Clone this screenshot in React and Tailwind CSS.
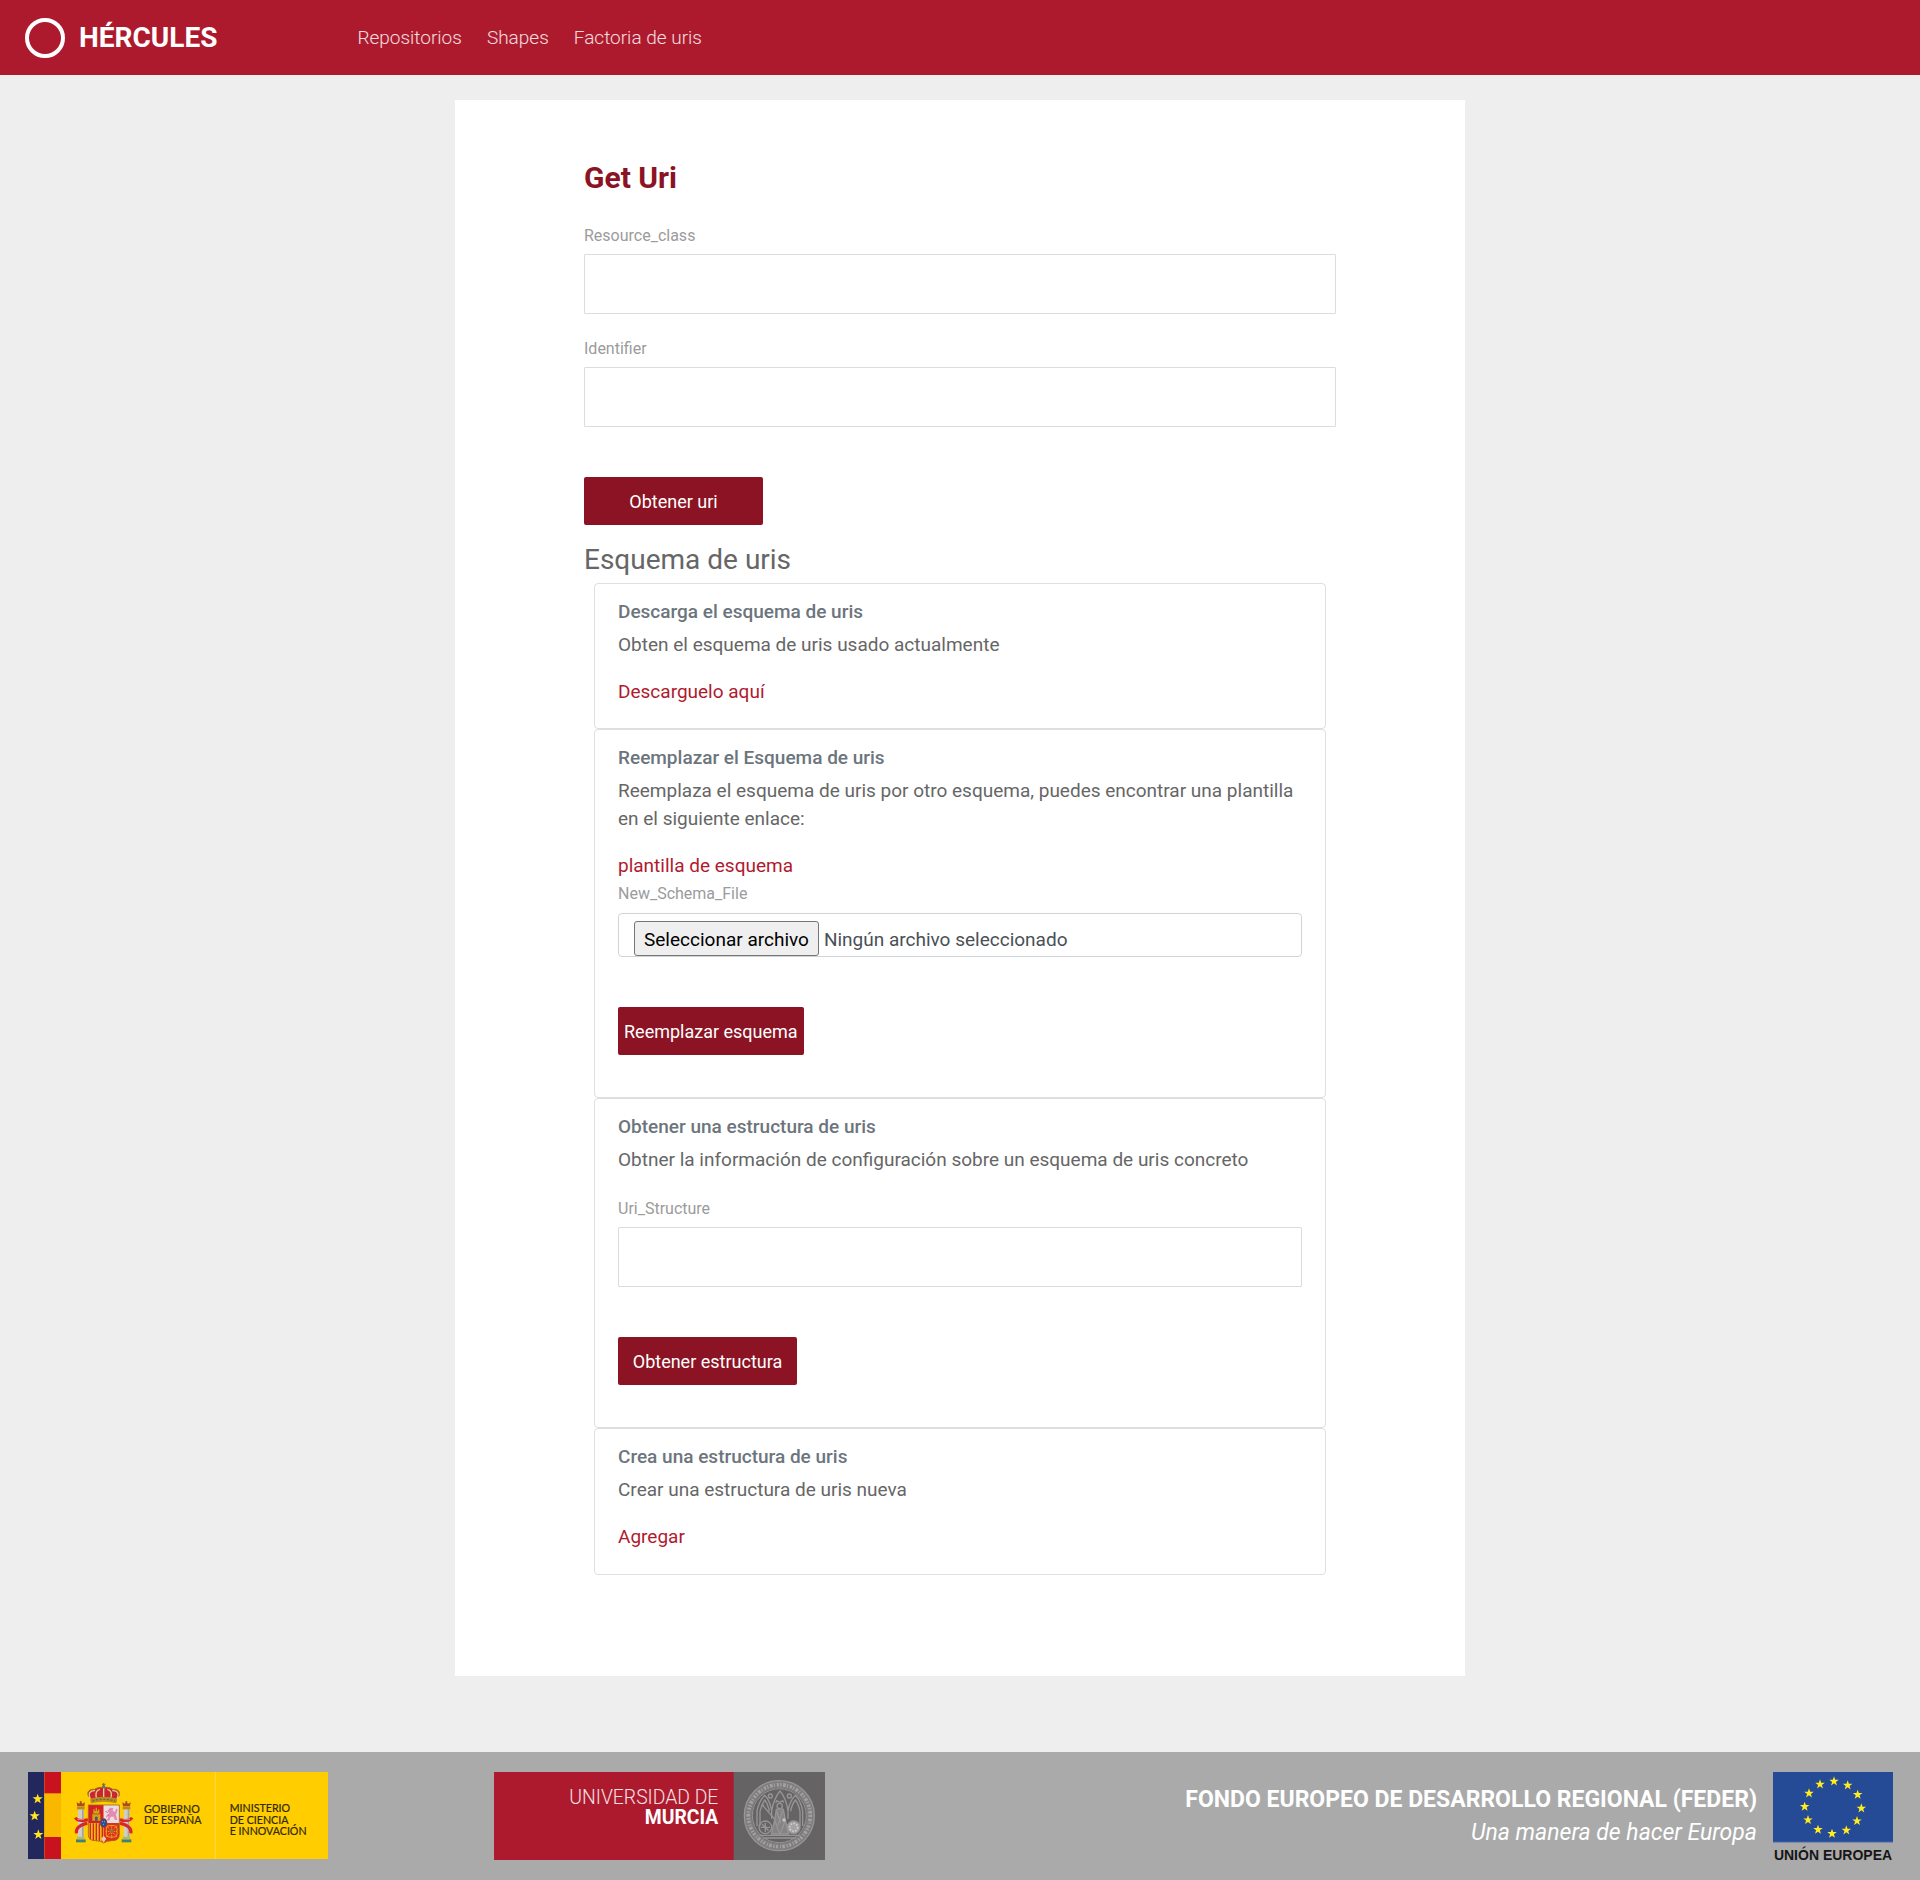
const STAR = '0,-10 2.4,-3.2 9.5,-3.1 3.8,1.2 5.9,8.1 0,4 -5.9,8.1 -3.8,1.2 -9.5,-3.1 -2.4,-3.2';

function Star({ x, y, size = 1 }) {
  return <polygon points={STAR} transform={`translate(${x} ${y}) scale(${size})`} />;
}

function Pillar({ x }) {
  return (
    <g transform={`translate(${x} 0)`}>
      <rect x="-14" y="298" width="29" height="9" fill="#3f8077" />
      <rect x="-10" y="289" width="21" height="9" fill="#a8b878" />
      <rect x="-8" y="208" width="17" height="82" fill="#cfcdc8" />
      <rect x="4" y="208" width="5" height="82" fill="#a5a3a0" />
      <rect x="-11" y="200" width="23" height="8" fill="#b98a1c" />
      <path d="M-10 199 L-12 187 L-4 191 L0 183 L5 191 L13 187 L11 199Z" fill="#b4452a" />
      <circle cx="0" cy="186" r="3" fill="#8a6a10" />
    </g>
  );
}

function SpainLogo() {
  return (
    <svg viewBox="84 96 900 261" className="h-[87px] w-[300px] shrink-0" role="img" aria-label="Gobierno de España, Ministerio de Ciencia e Innovación">
      <rect x="84" y="96" width="900" height="261" fill="#ffcd00" />
      <rect x="84" y="96" width="49" height="261" fill="#22285e" />
      <rect x="133" y="96" width="50" height="261" fill="#f9b700" />
      <rect x="133" y="96" width="50" height="64" fill="#c9121f" />
      <rect x="133" y="291" width="50" height="66" fill="#c9121f" />
      <g fill="#ffe620">
        <Star x={113} y={177} size={1.6} />
        <Star x={104} y={228} size={1.6} />
        <Star x={115} y={284} size={1.6} />
      </g>
      <rect x="644" y="96" width="4" height="261" fill="#ffd936" />

      {/* Crown */}
      <path d="M272 178 C256 158 266 146 284 148 C296 140 304 142 311 143 C318 142 327 140 338 148 C356 146 366 158 350 178Z" fill="#c9272d" />
      <path d="M272 178 C262 160 270 151 285 152 M290 178 C284 160 290 149 300 148 M332 178 C338 160 332 149 322 148 M350 178 C360 160 352 151 337 152 M311 144 V178" fill="none" stroke="#e6cf8a" strokeWidth="4" />
      <path d="M266 170 C258 156 268 146 284 148 C296 140 304 142 311 143 C318 142 327 140 338 148 C354 146 364 156 356 170" fill="none" stroke="#a07a18" strokeWidth="3" />
      <path d="M270 176 Q311 164 352 176 L349 190 Q311 181 273 190Z" fill="#c08a1a" />
      <path d="M277 182 Q311 174 345 182" fill="none" stroke="#3b7a5b" strokeWidth="4" strokeDasharray="6 5" />
      <circle cx="311" cy="140" r="5" fill="#567a86" />
      <path d="M311 129 V139 M306 133 H316" stroke="#8a6a10" strokeWidth="3" />

      <Pillar x={242} />
      <Pillar x={379} />

      {/* Ribbons */}
      <g fill="none" stroke="#d8262c" strokeWidth="9">
        <path d="M226 233 Q232 246 264 239" />
        <path d="M262 250 Q226 258 229 280" />
        <path d="M396 233 Q390 246 358 239" />
        <path d="M360 250 Q396 258 393 280" />
      </g>
      <path d="M232 238 H252 M370 238 H390" stroke="#f2b7a8" strokeWidth="2" />

      {/* Shield */}
      <path d="M265 195 H311 V249 H265Z" fill="#d3202a" />
      <path d="M311 195 H358 V249 H311Z" fill="#e8dfe2" />
      <path d="M265 249 H311 V309 Q300 302 286 302 Q265 302 265 284Z" fill="#f3b312" />
      <path d="M311 249 H358 V284 Q358 302 336 302 Q322 302 311 309Z" fill="#d9301f" />
      <path d="M271 250 V298 M280 250 V301 M289 250 V302 M298 250 V303 M307 250 V305" stroke="#cf2a20" strokeWidth="4" />
      <path d="M265 195 H358 V284 Q358 302 336 302 Q320 302 311 309 Q302 302 286 302 Q265 302 265 284Z" fill="none" stroke="#a8641a" strokeWidth="2.5" />
      <path d="M277 242 V222 H280 V208 H284 V213 H287 V203 H291 V213 H294 V208 H298 V222 H301 V242Z" fill="#d7a010" />
      <path d="M285 242 V232 Q289 227 293 232 V242Z" fill="#3a5a78" />
      <path d="M280 222 H298" stroke="#77520c" strokeWidth="2" />
      <path d="M322 212 L330 203 L340 204 L338 212 L345 216 L349 205 L353 209 L348 224 L352 240 L344 240 L341 230 L332 230 L328 242 L320 241 L326 230 L319 226 L328 220Z" fill="#e58bb0" />
      <path d="M324 218 L316 214 M327 224 L318 232" stroke="#d9709b" strokeWidth="3" />
      <g fill="none" stroke="#eda51a" strokeWidth="3">
        <rect x="319" y="257" width="32" height="34" rx="8" />
        <path d="M319 257 L351 291 M351 257 L319 291 M335 255 V295 M317 274 H353" strokeDasharray="4 2" />
      </g>
      <circle cx="335" cy="273" r="4" fill="#5a8a3a" />
      <path d="M303 296 L311 287 L319 296 L311 308Z" fill="#e9c9a0" />
      <ellipse cx="311" cy="249" rx="11" ry="14" fill="#c4262e" />
      <ellipse cx="311" cy="249" rx="9" ry="12" fill="#20539b" />
      <path d="M307 245 h2 M313 245 h2 M310 253 h2" stroke="#f2d24a" strokeWidth="3" />

      <g fill="#33290a" stroke="#33290a" strokeWidth="0.6" fontFamily="Lato, 'Open Sans', sans-serif" fontSize="32">
        <text x="432" y="218">GOBIERNO</text>
        <text x="432" y="251">DE ESPAÑA</text>
        <text x="689" y="217">MINISTERIO</text>
        <text x="689" y="251">DE CIENCIA</text>
        <text x="689" y="285">E INNOVACIÓN</text>
      </g>
    </svg>
  );
}

function MurciaLogo() {
  return (
    <svg viewBox="72 96 993 264" className="h-[88px] w-[331px] shrink-0" role="img" aria-label="Universidad de Murcia">
      <rect x="72" y="96" width="720" height="264" fill="#ae1a2d" />
      <rect x="791" y="96" width="274" height="264" fill="#666364" />
      <text x="745" y="191" textAnchor="end" fill="#f7e0e3" fontFamily="Roboto, sans-serif" fontWeight="300" fontSize="58">UNIVERSIDAD DE</text>
      <text x="745" y="253" textAnchor="end" fill="#ffffff" fontFamily="Roboto, sans-serif" fontWeight="700" fontSize="58">MURCIA</text>

      {/* University seal */}
      <g fill="none" stroke="#979596">
        <circle cx="928" cy="227" r="94" stroke="#7f7d7e" strokeWidth="22" />
        <circle cx="928" cy="227" r="105" strokeWidth="4" />
        <circle cx="928" cy="227" r="81" strokeWidth="3" />
        <circle cx="928" cy="227" r="93" stroke="#a3a1a2" strokeWidth="11" strokeDasharray="4 5 8 4 3 6 6 4" />
        <g strokeWidth="4">
          <path d="M861 258 V212 Q868 182 884 166 Q900 182 905 212 V236" />
          <path d="M905 212 Q912 174 930 153 Q948 174 954 212 V236" />
          <path d="M954 212 Q960 182 976 166 Q992 182 998 212 V258" />
          <path d="M870 258 V214 Q876 192 884 180 Q894 192 898 214" />
          <path d="M962 214 Q966 192 976 180 Q986 192 990 214 V258" />
          <path d="M878 196 L916 240 M874 200 L882 194" />
          <circle cx="901" cy="168" r="6" />
          <circle cx="958" cy="168" r="6" />
          <circle cx="929" cy="198" r="8" />
          <path d="M917 188 L920 182 L929 187 L938 182 L941 188" />
          <path d="M919 208 Q929 204 940 208 L946 240 L956 282 H904 L914 240Z" fill="#858384" />
          <path d="M920 214 L932 250 M938 212 L924 256 M914 240 L930 284 M946 240 L930 284" />
          <path d="M868 286 H990 M880 294 H978" />
          <circle cx="886" cy="262" r="19" />
          <path d="M872 262 H900 M886 248 V276 M876 252 L896 272" />
        </g>
        <circle cx="971" cy="262" r="19" fill="#a5a3a4" strokeWidth="4" />
        <circle cx="971" cy="262" r="12" stroke="#d0cfcf" strokeWidth="5" strokeDasharray="5 4" />
        <circle cx="942" cy="240" r="5" fill="#c5c4c4" stroke="none" />
      </g>
    </svg>
  );
}

const EU_STARS = [
  [222, 64], [263, 76], [293, 104], [304, 145], [291, 183], [259, 211],
  [216, 221], [174, 209], [144, 180], [134, 140], [147, 100], [180, 73],
];

function EuropeLogo() {
  return (
    <svg viewBox="39 36 360 270" className="h-[90px] w-[120px] shrink-0" role="img" aria-label="Unión Europea">
      <rect x="39" y="36" width="360" height="210" fill="#254a96" />
      <rect x="39" y="245" width="360" height="3" fill="#5f79ae" />
      <g fill="#ffed1f">
        {EU_STARS.map(([x, y]) => <Star key={`${x}-${y}`} x={x} y={y} size={1.5} />)}
      </g>
      <text x="219" y="299" textAnchor="middle" fill="#161616" fontFamily="'Liberation Sans', Arial, sans-serif" fontWeight="700" fontSize="42">UNIÓN EUROPEA</text>
    </svg>
  );
}

function Field({ id, label }) {
  return (
    <div>
      <label htmlFor={id} className="block text-base leading-6 text-[#9b9b9b]">{label}</label>
      <input id={id} type="text" className="mt-[6px] block h-[60px] w-full rounded-[1px] border border-[#dedbdd] bg-white px-3 outline-none" />
    </div>
  );
}

function ActionButton({ children }) {
  return (
    <button type="button" className="mt-[50px] block h-12 min-w-[179px] rounded-[2px] bg-[#8b1323] px-[6px] pt-[2px] text-lg text-white">
      {children}
    </button>
  );
}

function SchemaCard({ title, text, children, className = '' }) {
  return (
    <section className={`rounded border border-[#dfdfdf] px-[23px] pt-[17px] ${className}`}>
      <h3 className="mb-2 text-[19px] leading-[22px] font-medium text-[#6c757d]">{title}</h3>
      <p className="mb-[19px]">{text}</p>
      {children}
    </section>
  );
}

function TextLink({ children }) {
  return <a href="#" className="block w-fit text-[#b01a2e]">{children}</a>;
}

export default function App() {
  return (
    <div className="flex min-h-screen flex-col bg-[#eeeeee] font-[Roboto,sans-serif] text-[19px] leading-7 text-[#666666]">
      <header className="flex h-[75px] items-center bg-[#ae1a2d] px-[25px] text-white">
        <a href="#" className="flex items-center gap-[14px] text-[28px] font-bold">
          <svg viewBox="0 0 40 40" className="size-10" aria-hidden="true">
            <circle cx="20" cy="20" r="18" fill="none" stroke="currentColor" strokeWidth="4" />
          </svg>
          HÉRCULES
        </a>
        <nav className="ml-[140px] flex gap-[25px] pt-px font-light text-white/85">
          <a href="#">Repositorios</a>
          <a href="#">Shapes</a>
          <a href="#">Factoria de uris</a>
        </nav>
      </header>

      <main className="mx-auto mt-[25px] mb-[75px] w-full max-w-[1010px] bg-white px-[129px] pt-[60px] pb-[101px]">
        <h1 className="text-[30px] leading-9 font-bold text-[#8b1323]">Get Uri</h1>
        <form className="mt-7">
          <div className="flex flex-col gap-[23px]">
            <Field id="resource-class" label="Resource_class" />
            <Field id="identifier" label="Identifier" />
          </div>
          <ActionButton>Obtener uri</ActionButton>
        </form>

        <h2 className="mt-[17px] text-[28px] leading-9">Esquema de uris</h2>
        <div className="mx-[10px] mt-[5px]">
          <SchemaCard title="Descarga el esquema de uris" text="Obten el esquema de uris usado actualmente" className="pb-[22px]">
            <TextLink>Descarguelo aquí</TextLink>
          </SchemaCard>

          <SchemaCard
            title="Reemplazar el Esquema de uris"
            text="Reemplaza el esquema de uris por otro esquema, puedes encontrar una plantilla en el siguiente enlace:"
            className="pb-[42px]"
          >
            <TextLink>plantilla de esquema</TextLink>
            <form>
              <label htmlFor="schema-file" className="mt-[2px] block text-base leading-6 text-[#9b9b9b]">New_Schema_File</label>
              <label className="mt-[7px] flex h-11 items-end overflow-hidden rounded border border-[#ced4da] px-[15px] text-[#495057]">
                <input id="schema-file" type="file" className="sr-only" />
                <span className="flex h-[35px] items-center rounded-[3px] border border-[#767676] bg-[#efefef] px-[9px] pt-[2px] text-black">Seleccionar archivo</span>
                <span className="flex h-[35px] items-center pt-[2px] pl-[5px]">Ningún archivo seleccionado</span>
              </label>
              <ActionButton>Reemplazar esquema</ActionButton>
            </form>
          </SchemaCard>

          <SchemaCard
            title="Obtener una estructura de uris"
            text="Obtner la información de configuración sobre un esquema de uris concreto"
            className="pb-[42px]"
          >
            <form className="pt-1">
              <Field id="uri-structure" label="Uri_Structure" />
              <ActionButton>Obtener estructura</ActionButton>
            </form>
          </SchemaCard>

          <SchemaCard title="Crea una estructura de uris" text="Crear una estructura de uris nueva" className="pb-[23px]">
            <TextLink>Agregar</TextLink>
          </SchemaCard>
        </div>
      </main>

      <footer className="mt-auto flex items-start bg-[#aaaaaa] pt-5 pr-[27px] pb-[18px] pl-7">
        <SpainLogo />
        <div className="ml-[166px]">
          <MurciaLogo />
        </div>
        <div className="ml-auto flex gap-4">
          <div className="pt-[11px] text-right text-[23px] leading-[33px] text-white">
            <p className="font-bold">FONDO EUROPEO DE DESARROLLO REGIONAL (FEDER)</p>
            <p className="italic">Una manera de hacer Europa</p>
          </div>
          <EuropeLogo />
        </div>
      </footer>
    </div>
  );
}
